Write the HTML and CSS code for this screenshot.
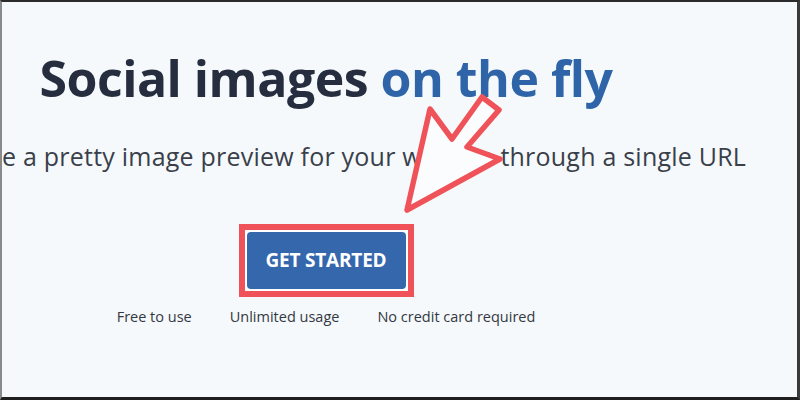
FILE: index.html
```html
<!DOCTYPE html>
<html>
<head>
<meta charset="utf-8">
<link rel="stylesheet" href="styles.css">
</head>
<body>
<div class="frame">
  <main class="hero">
    <h1 class="title">Social images <span class="accent">on the fly</span></h1>
    <p class="subtitle">Generate a pretty image preview for your website through a single URL</p>
    <div class="cta-mark">
      <a class="cta" href="#">GET STARTED</a>
    </div>
    <ul class="perks">
      <li>Free to use</li>
      <li>Unlimited usage</li>
      <li>No credit card required</li>
    </ul>
  </main>
  <svg class="arrow" width="120" height="140" viewBox="0 0 120 140">
    <polygon points="15,123 38,22 60,52 90,10 107,23 75,60 108,72" fill="#fbfcfe" stroke="#ef5359" stroke-width="5.5" stroke-linejoin="round"/>
  </svg>
</div>
</body>
</html>
```

FILE: styles.css
```css
* { box-sizing: border-box; }
html, body { margin: 0; padding: 0; }
body {
  width: 800px;
  height: 400px;
  overflow: hidden;
  background: #f5f9fc;
  font-family: "Open Sans", "Noto Sans", sans-serif;
}
.frame {
  position: relative;
  width: 800px;
  height: 400px;
  border-top: 2px solid #2b2b2b;
  border-left: 2px solid #8a8a8a;
  border-right: 3px solid #3a3a3a;
  border-bottom: 3px solid #1f1f1f;
  background: #f5f9fc;
  overflow: hidden;
}
.hero {
  width: 648px;
  display: flex;
  flex-direction: column;
  align-items: center;
  padding-top: 42px;
}
.title {
  margin: 0;
  font-size: 50px;
  line-height: 68px;
  font-weight: 700;
  color: #262d3e;
  white-space: nowrap;
  letter-spacing: -0.5px;
}
.accent { color: #2f65a8; }
.subtitle {
  margin: 29px 0 0;
  font-size: 25px;
  line-height: 30px;
  letter-spacing: 0.22px;
  color: #3a3f4a;
  white-space: nowrap;
  flex-shrink: 0;
}
.cta-mark {
  margin-top: 53px;
  border: 6px solid #ef5359;
  padding: 2px;
  background: #ffffff;
}
.cta {
  display: block;
  width: 159px;
  height: 57px;
  line-height: 57px;
  text-align: center;
  background: #3567ad;
  color: #ffffff;
  border-radius: 4px;
  font-size: 19px;
  font-weight: 700;
  letter-spacing: -0.2px;
  text-decoration: none;
}
.perks {
  list-style: none;
  margin: 10px 0 0;
  padding: 0;
  display: flex;
  gap: 38px;
  font-size: 14.5px;
  line-height: 20px;
  color: #333842;
}
.arrow {
  position: absolute;
  left: 390px;
  top: 85px;
}
```
